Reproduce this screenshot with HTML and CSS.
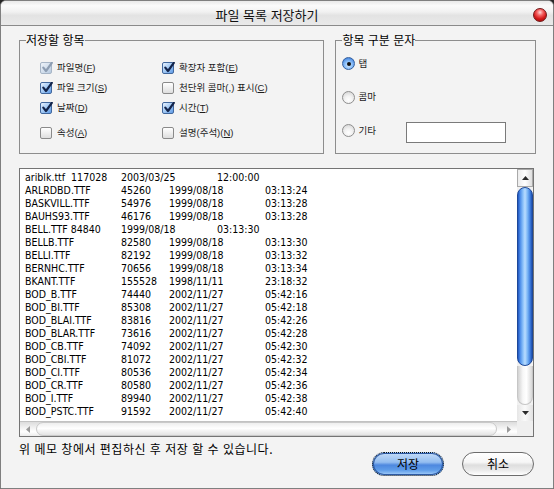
FILE: index.html
```html
<!DOCTYPE html>
<html lang="ko">
<head>
<meta charset="utf-8">
<title>파일 목록 저장하기</title>
<link rel="stylesheet" href="styles.css">
</head>
<body>
<div class="window">
  <div class="titlebar">
    <span class="title">파일 목록 저장하기</span>
    <span class="close"></span>
  </div>
  <div class="content">
    <div class="groups">
      <fieldset class="group items">
        <legend>저장할 항목</legend>
        <div class="checks">
          <label class="opt"><span class="cb dis"><svg class="tick" viewBox="0 0 12 12" width="12" height="12"><path d="M2.3 5.6 L5 9 L10.8 0.8"/></svg></span><span>파일명(<u>F</u>)</span></label>
          <label class="opt"><span class="cb on"><svg class="tick" viewBox="0 0 12 12" width="12" height="12"><path d="M2.3 5.6 L5 9 L10.8 0.8"/></svg></span><span>확장자 포함(<u>E</u>)</span></label>
          <label class="opt"><span class="cb on"><svg class="tick" viewBox="0 0 12 12" width="12" height="12"><path d="M2.3 5.6 L5 9 L10.8 0.8"/></svg></span><span>파일 크기(<u>S</u>)</span></label>
          <label class="opt"><span class="cb"></span><span>천단위 콤마(,) 표시(<u>C</u>)</span></label>
          <label class="opt"><span class="cb on"><svg class="tick" viewBox="0 0 12 12" width="12" height="12"><path d="M2.3 5.6 L5 9 L10.8 0.8"/></svg></span><span>날짜(<u>D</u>)</span></label>
          <label class="opt"><span class="cb on"><svg class="tick" viewBox="0 0 12 12" width="12" height="12"><path d="M2.3 5.6 L5 9 L10.8 0.8"/></svg></span><span>시간(<u>T</u>)</span></label>
          <label class="opt last"><span class="cb"></span><span>속성(<u>A</u>)</span></label>
          <label class="opt last"><span class="cb"></span><span>설명(주석)(<u>N</u>)</span></label>
        </div>
      </fieldset>
      <fieldset class="group sep">
        <legend>항목 구분 문자</legend>
        <div class="radios">
          <div class="rrow"><label class="ropt"><span class="rd on"><span class="dot"></span></span><span>탭</span></label></div>
          <div class="rrow"><label class="ropt"><span class="rd"></span><span>콤마</span></label></div>
          <div class="rrow"><label class="ropt"><span class="rd"></span><span>기타</span></label><span class="field"></span></div>
        </div>
      </fieldset>
    </div>

    <div class="listbox">
      <div class="listmain">
<pre class="listtext"><span class="n">ariblk.ttf  117028</span>	2003/03/25	12:00:00
<span class="n">ARLRDBD.TTF</span>	45260	1999/08/18	03:13:24
<span class="n">BASKVILL.TTF</span>	54976	1999/08/18	03:13:28
<span class="n">BAUHS93.TTF</span>	46176	1999/08/18	03:13:28
<span class="n">BELL.TTF 84840</span>	1999/08/18	03:13:30
<span class="n">BELLB.TTF</span>	82580	1999/08/18	03:13:30
<span class="n">BELLI.TTF</span>	82192	1999/08/18	03:13:32
<span class="n">BERNHC.TTF</span>	70656	1999/08/18	03:13:34
<span class="n">BKANT.TTF</span>	155528	1998/11/11	23:18:32
<span class="n">BOD_B.TTF</span>	74440	2002/11/27	05:42:16
<span class="n">BOD_BI.TTF</span>	85308	2002/11/27	05:42:18
<span class="n">BOD_BLAI.TTF</span>	83816	2002/11/27	05:42:26
<span class="n">BOD_BLAR.TTF</span>	73616	2002/11/27	05:42:28
<span class="n">BOD_CB.TTF</span>	74092	2002/11/27	05:42:30
<span class="n">BOD_CBI.TTF</span>	81072	2002/11/27	05:42:32
<span class="n">BOD_CI.TTF</span>	80536	2002/11/27	05:42:34
<span class="n">BOD_CR.TTF</span>	80580	2002/11/27	05:42:36
<span class="n">BOD_I.TTF</span>	89940	2002/11/27	05:42:38
<span class="n">BOD_PSTC.TTF</span>	91592	2002/11/27	05:42:40</pre>
        <div class="vscroll">
          <div class="vbtn up"><svg viewBox="0 0 7 4" width="7" height="4"><path d="M0 4 L3.5 0 L7 4Z"/></svg></div>
          <div class="vthumb"></div>
          <div class="vtrack"></div>
          <div class="vbtn down"><svg viewBox="0 0 7 4" width="7" height="4"><path d="M0 0 L7 0 L3.5 4Z"/></svg></div>
        </div>
      </div>
      <div class="hrow">
        <div class="hscroll">
          <span class="harrow"><svg viewBox="0 0 4 7" width="4" height="7"><path d="M4 0 L4 7 L0 3.5Z"/></svg></span>
          <span class="hthumb"></span>
          <span class="harrow"><svg viewBox="0 0 4 7" width="4" height="7"><path d="M0 0 L4 3.5 L0 7Z"/></svg></span>
        </div>
        <div class="corner"></div>
      </div>
    </div>

    <div class="footer">
      <p class="msg">위 메모 창에서 편집하신 후 저장 할 수 있습니다.</p>
      <div class="buttons">
        <button class="btn default">저장</button>
        <button class="btn cancel">취소</button>
      </div>
    </div>
  </div>
</div>
</body>
</html>
```

FILE: styles.css
```css
html, body {
  margin: 0;
  padding: 0;
  background: #262626;
}

.window {
  width: 554px;
  height: 489px;
  box-sizing: border-box;
  border: 1px solid #7f7f7f;
  border-radius: 6px 6px 0 0;
  background: #f3f3f3;
  overflow: hidden;
  font-family: "Noto Sans CJK KR", "Noto Sans", sans-serif;
  color: #000;
}

.titlebar {
  height: 24px;
  border-bottom: 1px solid #8a8a8a;
  background: linear-gradient(#e9e9e9 0%, #fbfbfb 20%, #f1f1f1 45%, #e3e3e3 60%, #e9e9e9 100%);
  display: flex;
  align-items: center;
}

.title {
  flex: 1;
  text-align: center;
  font-size: 13px;
  line-height: 16px;
  padding-top: 3px;
  color: #111;
}

.close {
  width: 14px;
  height: 14px;
  box-sizing: border-box;
  margin: 3px 6px 0 0;
  border-radius: 50%;
  border: 1px solid #701818;
  background: radial-gradient(circle at 50% 28%, #ffd6d6 0, #f46060 30%, #d41818 62%, #9a0606 100%);
}

.content {
  padding: 8px 17px 0 18px;
}

.groups {
  display: flex;
  gap: 11px;
}

.group {
  margin: 0;
  padding: 0;
  min-width: 0;
  border: 1px solid #8d8d8d;
}

.group legend {
  padding: 0;
  margin-left: 6px;
  font-size: 12px;
  line-height: 12px;
}

.items { width: 306px; box-sizing: border-box; }
.sep { width: 201px; box-sizing: border-box; }

.checks {
  height: 107px;
  box-sizing: border-box;
  padding: 12px 0 0 20px;
  display: grid;
  grid-template-columns: 122px auto;
  grid-template-rows: 20px 20px 20px 28px;
  align-items: center;
}

.opt {
  display: flex;
  align-items: center;
  gap: 5px;
  font-family: "Liberation Sans", "Noto Sans CJK KR", sans-serif;
  font-size: 9.5px;
  line-height: 12px;
  color: #1c1c1c;
  white-space: nowrap;
}

.opt.last { margin-top: 2px; }

.opt u { text-underline-offset: 1px; }

.cb {
  width: 12px;
  height: 12px;
  box-sizing: border-box;
  border: 1px solid #8a8a8a;
  border-radius: 2px;
  background: linear-gradient(#ffffff, #dedede);
  flex: none;
}

.cb.on {
  border-color: #41679c;
  background: linear-gradient(135deg, #eaf3fe 0%, #a9cdf5 45%, #5f9be6 100%);
}

.cb.dis {
  border-color: #a7b5c6;
  background: linear-gradient(135deg, #eef3f9 0%, #cfdceb 60%, #b7c9de 100%);
}

.tick {
  display: block;
  margin: -1px 0 0 0;
  fill: none;
  stroke: #13244a;
  stroke-width: 2.2;
  stroke-linecap: round;
  stroke-linejoin: round;
}

.cb.dis .tick { stroke: #8d9db2; }

.radios {
  height: 107px;
  box-sizing: border-box;
  padding: 10px 0 0 6px;
  display: grid;
  grid-template-rows: 15px 15px 15px;
  row-gap: 18.5px;
  align-content: start;
}

.rrow {
  display: flex;
  align-items: center;
}

.ropt {
  width: 64px;
  display: flex;
  align-items: center;
  gap: 3px;
  font-family: "Liberation Sans", "Noto Sans CJK KR", sans-serif;
  font-size: 9.5px;
  line-height: 12px;
  color: #1c1c1c;
}

.rd {
  width: 13px;
  height: 13px;
  box-sizing: border-box;
  border-radius: 50%;
  border: 1px solid #8e8e8e;
  background: radial-gradient(circle at 50% 70%, #ffffff 0, #f2f2f2 40%, #cfcfcf 100%);
  display: flex;
  align-items: center;
  justify-content: center;
  flex: none;
}

.rd.on {
  border-color: #35609f;
  background: radial-gradient(circle at 50% 65%, #d9ecff 0, #8fc2fa 40%, #3e7fdc 85%, #2a5fb8 100%);
}

.dot {
  width: 4px;
  height: 4px;
  border-radius: 50%;
  background: #111;
}

.field {
  width: 100px;
  height: 21px;
  box-sizing: border-box;
  border: 1px solid #7a7a7a;
  background: #fff;
  margin-top: 3px;
}

.listbox {
  margin-top: 14px;
  width: 515px;
  height: 269px;
  box-sizing: border-box;
  border: 1px solid #747474;
  background: #fff;
  display: flex;
  flex-direction: column;
}

.listmain {
  flex: 1;
  display: flex;
  min-height: 0;
}

.listtext {
  flex: 1;
  margin: 0;
  padding: 2px 0 0 5px;
  font-family: "DejaVu Sans Condensed", "Roboto", "DejaVu Sans", sans-serif;
  font-size: 10.5px;
  line-height: 13px;
  white-space: pre;
  tab-size: 48px;
  -moz-tab-size: 48px;
  overflow: hidden;
  color: #000;
}

.listtext .n {
  display: inline-block;
  min-width: 50px;
}

.vscroll {
  width: 16px;
  display: flex;
  flex-direction: column;
  background: #f1f1f1;
}

.vbtn {
  display: flex;
  align-items: center;
  justify-content: center;
  fill: #2b2b2b;
}

.vbtn.up {
  height: 18px;
  box-sizing: border-box;
  border: 1px solid #a9a9a9;
  background: linear-gradient(to right, #ececec, #ffffff 50%, #dedede);
}

.vbtn.down {
  height: 16px;
  background: linear-gradient(to right, #e6e6e6, #fafafa 50%, #e2e2e2);
}

.vthumb {
  height: 179px;
  box-sizing: border-box;
  border: 1px solid #1d4898;
  border-radius: 8px;
  background: linear-gradient(to right, #1f55c0 0%, #4e8ee9 16%, #8cc2fa 36%, #b9dcff 50%, #7ab5f5 68%, #3f7fe0 86%, #1e4fae 100%);
}

.vtrack {
  flex: 1;
  box-sizing: border-box;
  border: 1px solid #c6c6c6;
  border-top: none;
  border-radius: 0 0 8px 8px;
  background: linear-gradient(to right, #d2d2d2, #f7f7f7 35%, #ffffff 60%, #d8d8d8);
}

.hrow {
  height: 15px;
  display: flex;
}

.hscroll {
  flex: 1;
  display: flex;
  align-items: center;
  box-sizing: border-box;
  border-top: 1px solid #c2c2c2;
  background: linear-gradient(#dcdcdc, #f4f4f4 45%, #ffffff 70%, #ebebeb);
  fill: #9a9a9a;
}

.harrow {
  width: 16px;
  display: flex;
  justify-content: center;
}

.hthumb {
  flex: 1;
  height: 14px;
  box-sizing: border-box;
  border: 1px solid #c9c9c9;
  border-radius: 7px;
  background: linear-gradient(#eeeeee, #ffffff 45%, #f6f6f6 60%, #e3e3e3);
  margin-right: 4px;
}

.corner {
  width: 16px;
  background: #efefef;
}

.footer {
  display: flex;
  padding-top: 4px;
}

.msg {
  flex: 1;
  margin: 0;
  font-size: 12px;
  line-height: 16px;
  letter-spacing: 0.5px;
}

.buttons {
  display: flex;
  gap: 18px;
  margin-top: 11px;
  margin-right: 2px;
}

.btn {
  width: 72px;
  height: 24px;
  padding: 0;
  border-radius: 12px;
  font-family: "Noto Sans CJK KR", sans-serif;
  font-size: 12px;
  line-height: 20px;
  color: #000;
}

.btn.default {
  border: 1px dotted #111;
  box-shadow: inset 0 0 0 1px #2d5aa4;
  background: linear-gradient(#c4dcf8 0%, #93bdf0 42%, #4d88df 55%, #5f9de9 78%, #a6cffa 100%);
}

.btn.cancel {
  border: 1px solid #6c6c6c;
  background: linear-gradient(#ffffff 0%, #f6f6f6 42%, #dedede 55%, #ececec 80%, #ffffff 100%);
}
```
